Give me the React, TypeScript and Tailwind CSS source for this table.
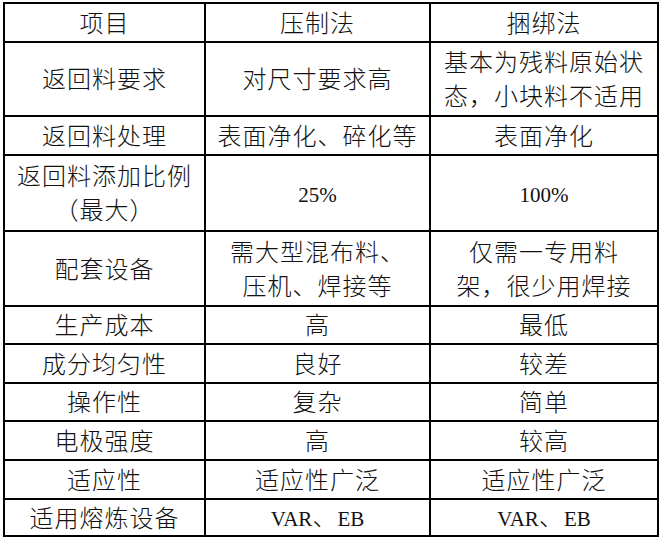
import React from 'react';

type Row = {
  h: string;
  cells: React.ReactNode[][];
};

const Latin = ({ children }: { children: React.ReactNode }) => (
  <span className="text-[21px] tracking-normal">{children}</span>
);

// each cell is a list of lines
const rows: Row[] = [
  { h: 'h-[39px]', cells: [['项目'], ['压制法'], ['捆绑法']] },
  { h: 'h-[74px]', cells: [['返回料要求'], ['对尺寸要求高'], ['基本为残料原始状', '态，小块料不适用']] },
  { h: 'h-[39px]', cells: [['返回料处理'], ['表面净化、碎化等'], ['表面净化']] },
  {
    h: 'h-[76px]',
    cells: [['返回料添加比例', '（最大）'], [<Latin>25%</Latin>], [<Latin>100%</Latin>]],
  },
  { h: 'h-[75px]', cells: [['配套设备'], ['需大型混布料、', '压机、焊接等'], ['仅需一专用料', '架，很少用焊接']] },
  { h: 'h-[38px]', cells: [['生产成本'], ['高'], ['最低']] },
  { h: 'h-[39px]', cells: [['成分均匀性'], ['良好'], ['较差']] },
  { h: 'h-[38px]', cells: [['操作性'], ['复杂'], ['简单']] },
  { h: 'h-[39px]', cells: [['电极强度'], ['高'], ['较高']] },
  { h: 'h-[39px]', cells: [['适应性'], ['适应性广泛'], ['适应性广泛']] },
  {
    h: 'h-[37px]',
    cells: [
      ['适用熔炼设备'],
      [<><Latin>VAR</Latin>、<Latin>EB</Latin></>],
      [<><Latin>VAR</Latin>、<Latin>EB</Latin></>],
    ],
  },
];

const Cell = ({ lines, h }: { lines: React.ReactNode[]; h: string }) => (
  <div
    className={`${h} pt-[2px] border-r-2 border-b-2 border-black flex flex-col items-center justify-center text-center leading-[34px]`}
  >
    {lines.map((line, i) => (
      <div key={i} className="whitespace-nowrap">
        {line}
      </div>
    ))}
  </div>
);

const App = () => {
  return (
    <div className="w-[664px] h-[542px] bg-white overflow-hidden">
      <div
        className="ml-[3px] mt-[2px] inline-grid grid-cols-[201px_225px_228px] border-l-2 border-t-2 border-black text-[24px] font-light tracking-[1px] text-[#111]"
        style={{ fontFamily: '"Liberation Serif", "Noto Sans CJK SC", serif' }}
      >
        {rows.map((row, r) =>
          row.cells.map((lines, c) => <Cell key={`${r}-${c}`} lines={lines} h={row.h} />)
        )}
      </div>
    </div>
  );
};

export default App;
